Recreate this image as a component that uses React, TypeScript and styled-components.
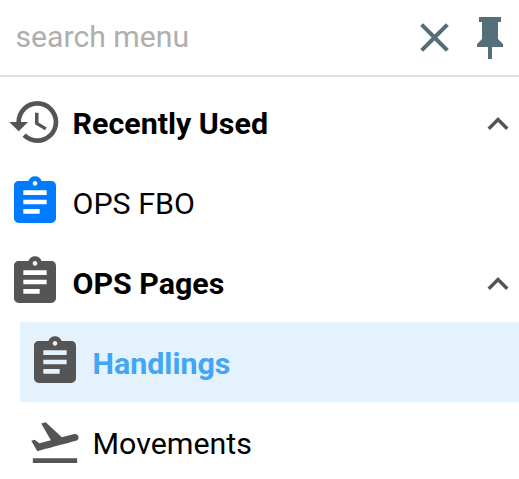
import React from "react"
import styled, { createGlobalStyle } from "styled-components"
import { MdAssignment, MdClose, MdExpandLess, MdFlightTakeoff, MdHistory } from "react-icons/md"

const GlobalStyle = createGlobalStyle`
  html, body {
    margin: 0;
    padding: 0;
    background: #fff;
    overflow: hidden;
  }
  * {
    box-sizing: border-box;
  }
`

const Panel = styled.div`
  width: 519px;
  height: 479px;
  overflow: hidden;
  font-family: Roboto, sans-serif;
  color: #000;
`

const SearchBar = styled.div`
  display: flex;
  align-items: center;
  gap: 18px;
  height: 77px;
  padding: 0 16px 0 15.5px;
  border-bottom: 2px solid #e0e0e0;
`

const SearchInput = styled.input`
  flex: 1;
  min-width: 0;
  border: none;
  outline: none;
  padding: 0 0 3px;
  font-family: inherit;
  font-size: 30.2px;
  background: transparent;

  &::placeholder {
    color: #aeaeae;
    opacity: 1;
  }
`

const BarButton = styled.span<{ $drop?: boolean }>`
  display: flex;
  color: #546e7a;
  margin-top: ${props => (props.$drop ? "1px" : "0")};
`

const Menu = styled.div`
  padding-top: 5px;
`

const Row = styled.div<{ $nested?: boolean; $active?: boolean }>`
  display: flex;
  align-items: center;
  height: 80px;
  margin-left: ${props => (props.$nested ? "20px" : "0")};
  padding: 0 0 0 7px;
  background: ${props => (props.$active ? "#e3f2fd" : "transparent")};
`

const RowIcon = styled.span<{ $color?: string }>`
  display: flex;
  flex: none;
  color: ${props => props.$color || "#555"};
  margin-right: 9.5px;
`

const Label = styled.span<{ $bold?: boolean; $active?: boolean }>`
  flex: 1;
  padding-top: 4px;
  font-size: 30.4px;
  line-height: 36px;
  font-weight: ${props => (props.$bold ? 700 : 400)};
  color: ${props => (props.$active ? "#42a5f5" : "#000")};
`

const Chevron = styled.span`
  display: flex;
  margin-top: 4px;
  color: #555;
`

const PinIcon = () => (
  <svg width="26" height="42" viewBox="0 0 26 42" fill="currentColor">
    <path d="M2 0H24V5H21V22L26 27V30H15V42H11V30H0V27L5 22V5H2Z" />
  </svg>
)

export default function App() {
  return (
    <Panel>
      <GlobalStyle />
      <SearchBar>
        <SearchInput placeholder="search menu" />
        <BarButton>
          <MdClose size={49} />
        </BarButton>
        <BarButton $drop>
          <PinIcon />
        </BarButton>
      </SearchBar>
      <Menu>
        <Row>
          <RowIcon>
            <MdHistory size={56} />
          </RowIcon>
          <Label $bold>Recently Used</Label>
          <Chevron>
            <MdExpandLess size={42} />
          </Chevron>
        </Row>
        <Row>
          <RowIcon $color="#007bff">
            <MdAssignment size={56} />
          </RowIcon>
          <Label>OPS FBO</Label>
        </Row>
        <Row>
          <RowIcon>
            <MdAssignment size={56} />
          </RowIcon>
          <Label $bold>OPS Pages</Label>
          <Chevron>
            <MdExpandLess size={42} />
          </Chevron>
        </Row>
        <Row $nested $active>
          <RowIcon>
            <MdAssignment size={56} />
          </RowIcon>
          <Label $bold $active>Handlings</Label>
        </Row>
        <Row $nested>
          <RowIcon>
            <MdFlightTakeoff size={56} />
          </RowIcon>
          <Label>Movements</Label>
        </Row>
      </Menu>
    </Panel>
  )
}
